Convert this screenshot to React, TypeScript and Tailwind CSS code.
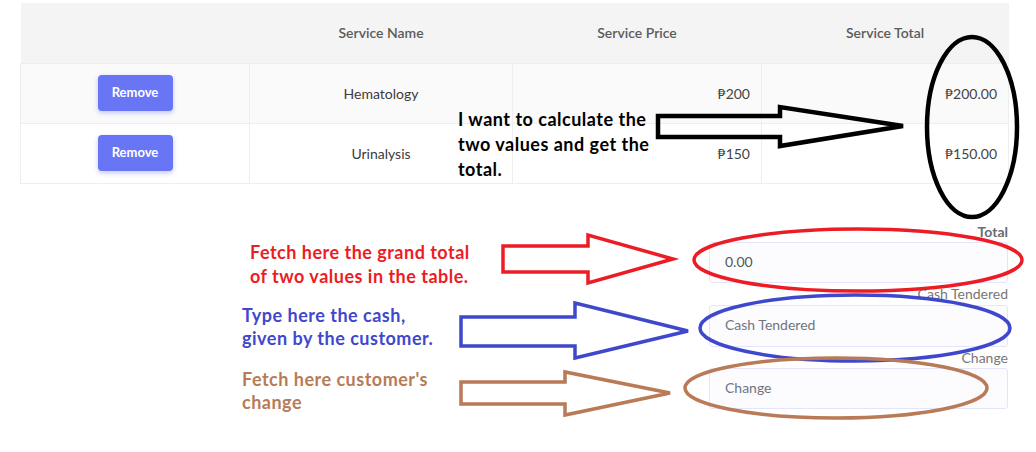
import React, { useState } from 'react';

const rows = [
  { name: 'Hematology', price: 200 },
  { name: 'Urinalysis', price: 150 },
];

function Arrow({ points, color, width }: { points: string; color: string; width: number }) {
  return <polygon points={points} fill="none" stroke={color} strokeWidth={width} strokeLinejoin="miter" />;
}

export default function App() {
  const [cash, setCash] = useState('');

  return (
    <div className="relative w-[1036px] h-[452px] bg-white overflow-hidden font-['Lato',sans-serif]">
      <div className="pl-[20px] pt-[3px]">
        <table className="w-[988px] table-fixed border-collapse text-[14px]">
          <thead>
            <tr className="h-[60px] bg-[#f4f4f4] text-[#5b5b5b]">
              <th className="w-[229px] font-semibold"></th>
              <th className="w-[263px] font-semibold">Service Name</th>
              <th className="w-[249px] font-semibold">Service Price</th>
              <th className="w-[247px] font-semibold">Service Total</th>
            </tr>
          </thead>
          <tbody>
            {rows.map((r, i) => (
              <tr key={r.name} className={`h-[60px] border border-[#eeeeee] ${i === 0 ? 'bg-[#fafafa]' : 'bg-white'}`}>
                <td className="border border-[#eeeeee] text-center">
                  <button className="w-[75px] h-[36px] rounded-[4px] bg-[#6875f5] text-white text-[13px] font-bold shadow-[0_2px_5px_rgba(104,117,245,0.4)]">
                    Remove
                  </button>
                </td>
                <td className="border border-[#eeeeee] text-center text-[#3a3a3a]">{r.name}</td>
                <td className="border border-[#eeeeee] text-right pr-[11px] text-[#444]">₱{r.price}</td>
                <td className="border border-[#eeeeee] text-right pr-[11px] text-[#444]">₱{r.price.toFixed(2)}</td>
              </tr>
            ))}
          </tbody>
        </table>

        <div className="w-[988px] mt-[38px] flex flex-col items-end text-[14px]">
          <label className="h-[20px] leading-[20px] font-bold text-[#666b75]">Total</label>
          <input
            readOnly
            value="0.00"
            className="w-[299px] h-[41px] px-[15px] pb-[2px] rounded-[3px] border border-[#e4e5fb] bg-[#fcfcff] text-[#555] outline-none"
          />
          <label className="h-[22px] leading-[22px] text-[#777]">Cash Tendered</label>
          <input
            value={cash}
            onChange={(e) => setCash(e.target.value)}
            placeholder="Cash Tendered"
            className="w-[299px] h-[42px] px-[15px] pb-[2px] rounded-[3px] border border-[#e4e5fb] bg-[#fcfcff] text-[#555] placeholder:text-[#6f7480] outline-none"
          />
          <label className="h-[21px] leading-[21px] text-[#777]">Change</label>
          <input
            readOnly
            placeholder="Change"
            className="w-[299px] h-[41px] px-[15px] pb-[2px] rounded-[3px] border border-[#e4e5fb] bg-[#fcfcff] text-[#555] placeholder:text-[#6f7480] outline-none"
          />
        </div>
      </div>

      {/* annotations drawn over the screenshot */}
      <svg className="absolute left-0 top-0 pointer-events-none" width="1036" height="452">
        <Arrow points="658,116 780,116 780,107 903,126 780,146 780,137 658,137" color="#000" width={4.5} />
        <ellipse cx="972" cy="127" rx="45" ry="90" fill="none" stroke="#000" strokeWidth={4.5} />

        <Arrow points="503,246 588,246 588,235 673,259 588,283 588,272 503,272" color="#ed1c24" width={3.5} />
        <ellipse cx="858" cy="260" rx="164" ry="31" fill="none" stroke="#ed1c24" strokeWidth={3.5} />

        <Arrow points="461,317 575,317 575,303 688,331 575,358 575,346 461,346" color="#3f48cc" width={3.5} />
        <ellipse cx="855" cy="328" rx="155" ry="33" fill="none" stroke="#3f48cc" strokeWidth={3.5} />

        <Arrow points="461,382 565,382 565,372 670,393 565,415 565,404 461,404" color="#b97a57" width={3.5} />
        <ellipse cx="836" cy="388" rx="151" ry="30" fill="none" stroke="#b97a57" strokeWidth={3.5} />
      </svg>

      <div className="absolute left-[458px] top-[107px] text-[18px] leading-[25px] tracking-[0.5px] font-bold text-black">
        I want to calculate the
        <br />
        two values and get the
        <br />
        total.
      </div>
      <div className="absolute left-[250px] top-[240px] text-[18px] leading-[24px] tracking-[0.5px] font-bold text-[#ed1c24]">
        Fetch here the grand total
        <br />
        of two values in the table.
      </div>
      <div className="absolute left-[242px] top-[304px] text-[18px] leading-[23px] tracking-[0.5px] font-bold text-[#3f48cc]">
        Type here the cash,
        <br />
        given by the customer.
      </div>
      <div className="absolute left-[242px] top-[368px] text-[18px] leading-[23px] tracking-[0.5px] font-bold text-[#b97a57]">
        Fetch here customer's
        <br />
        change
      </div>
    </div>
  );
}
